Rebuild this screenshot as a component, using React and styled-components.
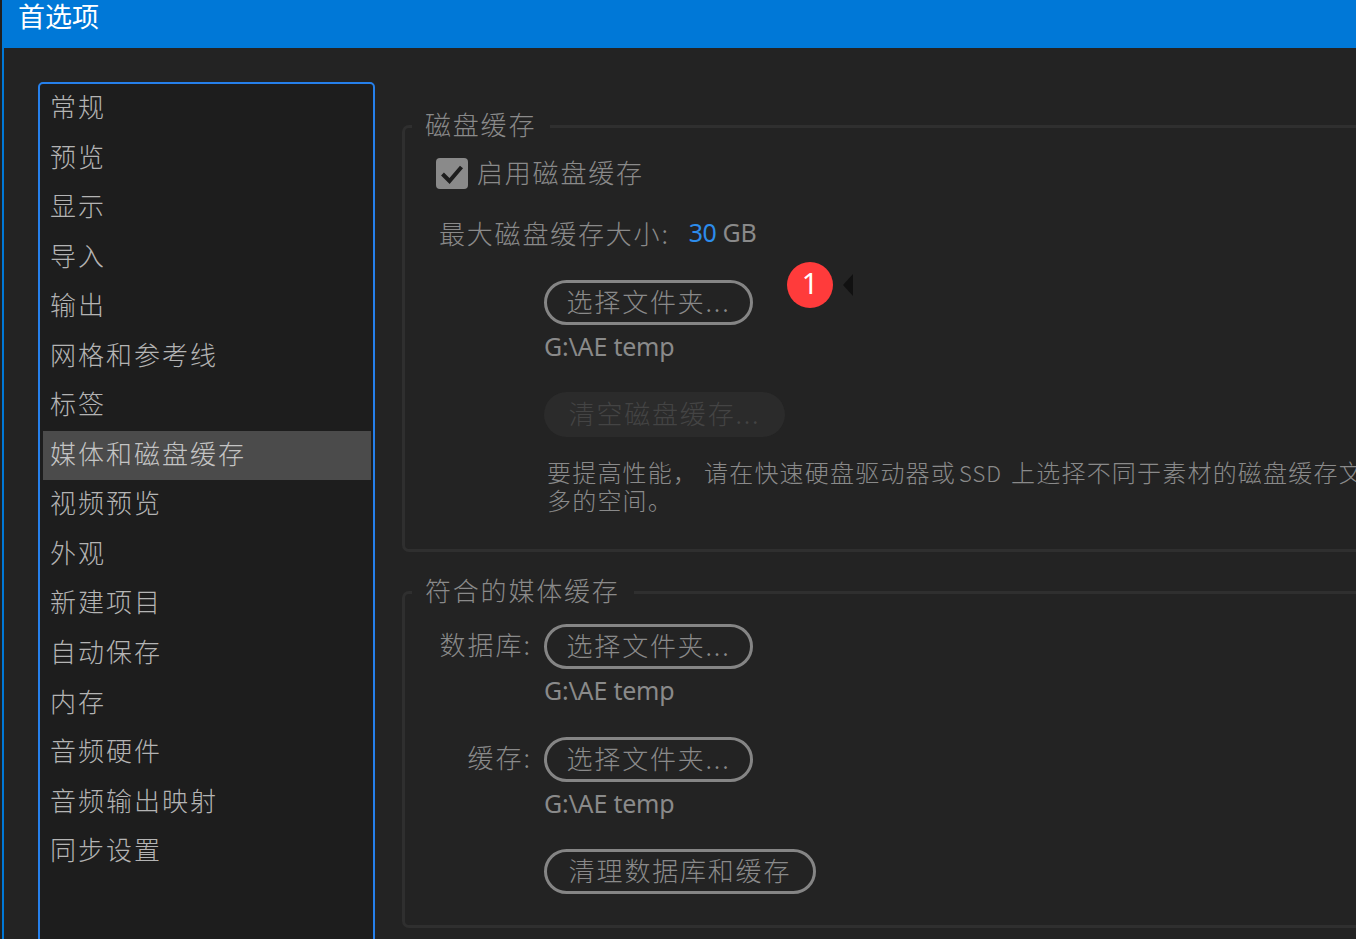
import styled, { createGlobalStyle } from 'styled-components';

const GlobalStyle = createGlobalStyle`
  html, body {
    margin: 0;
    height: 939px;
    overflow: hidden;
    background: #232323;
    font-family: "Noto Sans CJK SC", "Noto Sans", sans-serif;
  }
`;

const MENU_ITEMS = [
  '常规',
  '预览',
  '显示',
  '导入',
  '输出',
  '网格和参考线',
  '标签',
  '媒体和磁盘缓存',
  '视频预览',
  '外观',
  '新建项目',
  '自动保存',
  '内存',
  '音频硬件',
  '音频输出映射',
  '同步设置',
];

function App() {
  return (
    <StWindow>
      <GlobalStyle />
      <StEdge />
      <StMain>
        <StTitleBar>首选项</StTitleBar>
        <StBody>
          <StMenu>
            {MENU_ITEMS.map((item) => (
              <StMenuItem key={item} $selected={item === '媒体和磁盘缓存'}>
                {item}
              </StMenuItem>
            ))}
          </StMenu>
          <StContent>
            <StGroup $height={443}>
              <StLegend>磁盘缓存</StLegend>
              <StCheckRow>
                <StCheckbox>
                  <svg width="24" height="24" viewBox="0 0 24 24">
                    <path
                      d="M2.5 12 L9.5 19 L21.5 5"
                      fill="none"
                      stroke="#1d1d1d"
                      strokeWidth="4"
                    />
                  </svg>
                </StCheckbox>
                <StCheckLabel>启用磁盘缓存</StCheckLabel>
              </StCheckRow>
              <StSizeRow>
                <StText>最大磁盘缓存大小:</StText>
                <StLatin>
                  <StBlue>30</StBlue> GB
                </StLatin>
              </StSizeRow>
              <StIndented>
                <StButton $width={209}>选择文件夹...</StButton>
                <StPath>G:\AE temp</StPath>
                <StDisabledButton>清空磁盘缓存...</StDisabledButton>
                <StNote>
                  要提高性能<StComma>，</StComma>请在快速硬盘驱动器或<StAcronym>SSD</StAcronym>上选择不同于素材的磁盘缓存文件夹，并分配尽可能
                  <br />
                  多的空间。
                </StNote>
              </StIndented>
              <StBadge>1</StBadge>
              <StPointer />
            </StGroup>
            <StGroup $height={353}>
              <StLegend>符合的媒体缓存</StLegend>
              <StFolderRow $top={15}>
                <StRowLabel>数据库:</StRowLabel>
                <StButton $width={209}>选择文件夹...</StButton>
              </StFolderRow>
              <StPathRow>G:\AE temp</StPathRow>
              <StFolderRow $top={26}>
                <StRowLabel>缓存:</StRowLabel>
                <StButton $width={209}>选择文件夹...</StButton>
              </StFolderRow>
              <StPathRow>G:\AE temp</StPathRow>
              <StFolderRow $top={25}>
                <StRowLabel />
                <StButton $width={272}>清理数据库和缓存</StButton>
              </StFolderRow>
            </StGroup>
          </StContent>
        </StBody>
      </StMain>
    </StWindow>
  );
}

export default App;

const StWindow = styled.div`
  display: flex;
  width: 1356px;
  height: 939px;
  overflow: hidden;
`;

const StEdge = styled.div`
  flex: none;
  width: 2px;
  border-right: 2px solid #0078d7;
  background: #1f1f1f;
`;

const StMain = styled.div`
  flex: 1;
  min-width: 0;
  display: flex;
  flex-direction: column;
`;

const StTitleBar = styled.div`
  flex: none;
  height: 48px;
  box-sizing: border-box;
  padding-left: 14px;
  background: #0078d7;
  color: #fff;
  font-size: 27px;
  line-height: 32px;
`;

const StBody = styled.div`
  flex: 1;
  display: flex;
  align-items: flex-start;
  padding: 34px 0 0 34px;
  background: #232323;
`;

const StMenu = styled.ul`
  flex: none;
  box-sizing: border-box;
  width: 337px;
  height: 900px;
  margin: 0;
  padding: 0 2px 0 3px;
  border: 2px solid #2680eb;
  border-radius: 5px;
  background: #1d1d1d;
  list-style: none;
`;

const StMenuItem = styled.li`
  height: 49.55px;
  padding-left: 7px;
  background: ${(props) => (props.$selected ? '#4b4b4b' : 'transparent')};
  color: ${(props) => (props.$selected ? '#c4c4c4' : '#b4b4b4')};
  font-size: 26px;
  font-weight: 300;
  letter-spacing: 2px;
  line-height: 43px;
  white-space: nowrap;
`;

const StContent = styled.div`
  flex: none;
  width: 1100px;
  margin-left: 27px;
  padding-top: 27px;
  display: flex;
  flex-direction: column;
  gap: 23px;
`;

const StGroup = styled.fieldset`
  position: relative;
  box-sizing: border-box;
  height: ${(props) => props.$height}px;
  margin: 0;
  padding: 0 0 0 31px;
  border: 3px solid #2f2f2f;
  border-radius: 7px;
  min-width: 0;
`;

const StLegend = styled.legend`
  margin-left: -24px;
  padding: 0 14px 4px 13px;
  color: #8a8a8a;
  font-size: 26px;
  font-weight: 300;
  letter-spacing: 1.8px;
  line-height: 30px;
`;

const StText = styled.span`
  color: #8a8a8a;
  font-size: 26px;
  font-weight: 300;
  letter-spacing: 1.8px;
`;

const StCheckLabel = styled(StText)`
  padding-bottom: 4px;
`;

const StCheckRow = styled.div`
  display: flex;
  align-items: center;
  gap: 9px;
  margin-top: 15px;
  height: 31px;
`;

const StCheckbox = styled.span`
  display: flex;
  align-items: center;
  justify-content: center;
  box-sizing: border-box;
  width: 32px;
  height: 31px;
  border-radius: 4px;
  background: #8a8a8a;
`;

const StSizeRow = styled.div`
  display: flex;
  align-items: center;
  height: 36px;
  margin: 25px 0 0 3px;
`;

const StLatin = styled.span`
  margin-left: 19px;
  color: #8a8a8a;
  font-family: "Noto Sans", sans-serif;
  font-size: 25px;
  letter-spacing: -0.4px;
`;

const StBlue = styled.span`
  color: #2d8ceb;
`;

const StIndented = styled.div`
  margin: 30px 0 0 108px;
`;

const StButton = styled.div`
  box-sizing: border-box;
  width: ${(props) => props.$width}px;
  height: 45px;
  border: 3px solid #858585;
  border-radius: 23px;
  color: #8a8a8a;
  font-size: 26px;
  font-weight: 300;
  letter-spacing: 1.8px;
  line-height: 36px;
  text-align: center;
  white-space: nowrap;
`;

const StDisabledButton = styled.div`
  box-sizing: border-box;
  width: 241px;
  height: 45px;
  margin-top: 25px;
  border-radius: 23px;
  background: #2b2b2b;
  color: #444;
  font-size: 26px;
  font-weight: 300;
  letter-spacing: 1.8px;
  line-height: 42px;
  text-align: center;
  white-space: nowrap;
`;

const StPath = styled.div`
  height: 42px;
  color: #8a8a8a;
  font-family: "Noto Sans", sans-serif;
  font-size: 25px;
  letter-spacing: -0.2px;
  line-height: 42px;
`;

const StNote = styled.div`
  margin: 21px 0 0 3px;
  color: #8a8a8a;
  font-size: 24px;
  font-weight: 300;
  letter-spacing: 1.2px;
  line-height: 27px;
  white-space: nowrap;
`;

const StComma = styled.span`
  letter-spacing: 7px;
`;

const StAcronym = styled.span`
  margin: 0 9px 0 3px;
  font-size: 22px;
  letter-spacing: 1px;
`;

const StBadge = styled.div`
  position: absolute;
  left: 382px;
  top: 119px;
  width: 46px;
  height: 46px;
  border-radius: 50%;
  background: #ff3b3b;
  color: #fff;
  font-family: "Noto Sans", sans-serif;
  font-size: 29px;
  line-height: 42px;
  text-align: center;
`;

const StPointer = styled.div`
  position: absolute;
  left: 438px;
  top: 131px;
  width: 0;
  height: 0;
  border-top: 11px solid transparent;
  border-bottom: 11px solid transparent;
  border-right: 10px solid #111;
`;

const StFolderRow = styled.div`
  display: flex;
  align-items: center;
  margin-top: ${(props) => props.$top}px;
`;

const StRowLabel = styled.span`
  flex: none;
  width: 108px;
  box-sizing: border-box;
  padding: 0 12px 6px 0;
  color: #8a8a8a;
  font-size: 26px;
  font-weight: 300;
  letter-spacing: 2px;
  text-align: right;
  white-space: nowrap;
`;

const StPathRow = styled(StPath)`
  margin-left: 108px;
`;
